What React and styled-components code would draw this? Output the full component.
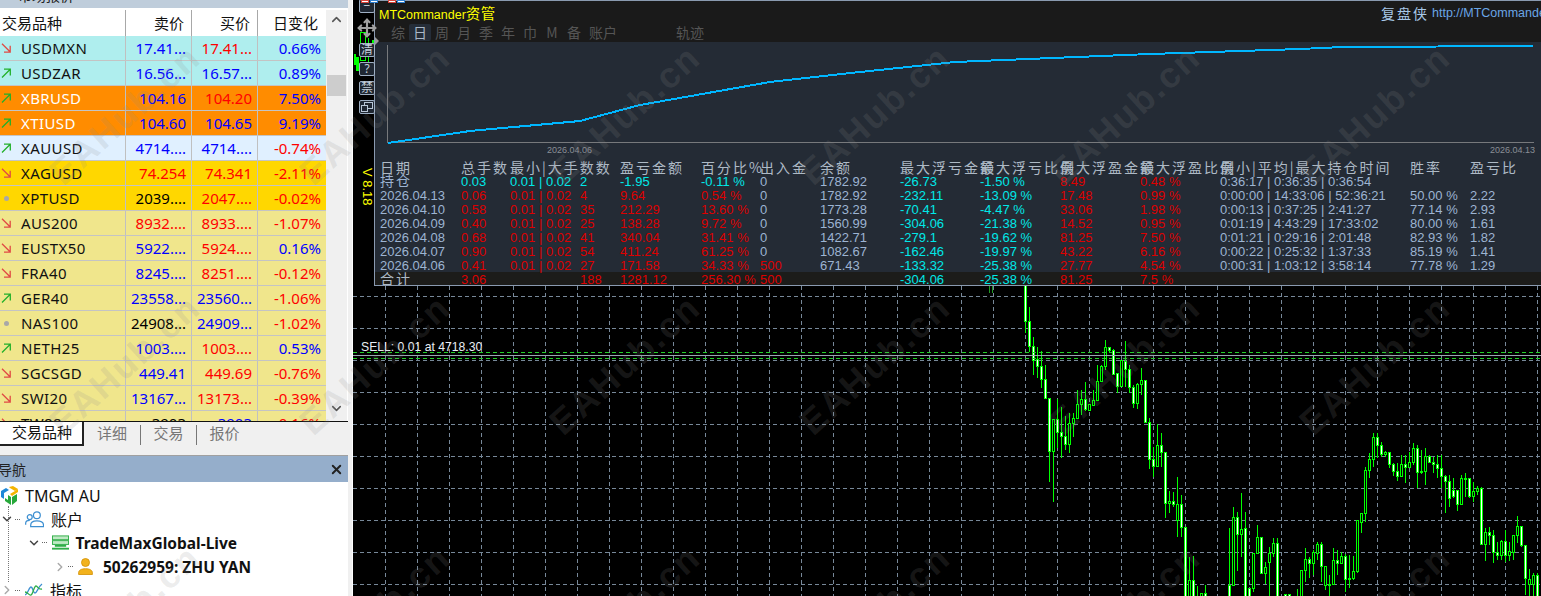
import React from 'react'
import styled, { createGlobalStyle } from 'styled-components'
import { Move, X, ChevronUp, ChevronDown, ChevronRight } from 'lucide-react'

const GlobalStyle = createGlobalStyle`
  html, body, #root { margin: 0; height: 100%; }
  body { overflow: hidden; background: #fff; font-family: "Noto Sans", "Noto Sans CJK SC", sans-serif; }
`

const QUOTES = [
  ['USDMXN', 'down', 'aqua', '17.41...', 'b', '17.41...', 'r', '0.66%', 'b'],
  ['USDZAR', 'up', 'aqua', '16.56...', 'b', '16.57...', 'b', '0.89%', 'b'],
  ['XBRUSD', 'up', 'orange', '104.16', 'b', '104.20', 'r', '7.50%', 'b'],
  ['XTIUSD', 'up', 'orange', '104.60', 'b', '104.65', 'b', '9.19%', 'b'],
  ['XAUUSD', 'up', 'ice', '4714....', 'b', '4714....', 'b', '-0.74%', 'r'],
  ['XAGUSD', 'down', 'gold', '74.254', 'r', '74.341', 'r', '-2.11%', 'r'],
  ['XPTUSD', 'flat', 'gold', '2039....', 'k', '2047....', 'r', '-0.02%', 'r'],
  ['AUS200', 'down', 'khaki', '8932....', 'r', '8933....', 'r', '-1.07%', 'r'],
  ['EUSTX50', 'down', 'khaki', '5922....', 'b', '5924....', 'r', '0.16%', 'b'],
  ['FRA40', 'down', 'khaki', '8245....', 'b', '8251....', 'r', '-0.12%', 'r'],
  ['GER40', 'up', 'khaki', '23558...', 'b', '23560...', 'b', '-1.06%', 'r'],
  ['NAS100', 'flat', 'khaki', '24908...', 'k', '24909...', 'b', '-1.02%', 'r'],
  ['NETH25', 'up', 'khaki', '1003....', 'b', '1003....', 'r', '0.53%', 'b'],
  ['SGCSGD', 'down', 'khaki', '449.41', 'b', '449.69', 'r', '-0.76%', 'r'],
  ['SWI20', 'down', 'khaki', '13167...', 'b', '13173...', 'r', '-0.39%', 'r'],
  ['TW88', 'down', 'khaki', '3903', 'k', '3903', 'b', '-0.16%', 'r'],
]

const ROW_BG = { aqua: '#afeeee', orange: '#ff8c00', ice: '#e0f0ff', gold: '#ffd700', khaki: '#f0e68c' }
const INK = { b: '#0000ff', r: '#ff0000', k: '#000' }
const TONE = { slate: '#9db4d2', red: '#dd0000', cyan: '#00e8e8', head: '#aebac6' }

const STATS = [
  ['持仓', '0.03', '0.01 | 0.02', '2', '-1.95', '-0.11 %', '0', '1782.92', '-26.73', '-1.50 %', '8.49', '0.48 %', '0:36:17 | 0:36:35 | 0:36:54', '', ''],
  ['2026.04.13', '0.06', '0.01 | 0.02', '4', '9.64', '0.54 %', '0', '1782.92', '-232.11', '-13.09 %', '17.48', '0.99 %', '0:00:00 | 14:33:06 | 52:36:21', '50.00 %', '2.22'],
  ['2026.04.10', '0.58', '0.01 | 0.02', '35', '212.29', '13.60 %', '0', '1773.28', '-70.41', '-4.47 %', '33.06', '1.98 %', '0:00:13 | 0:37:25 | 2:41:27', '77.14 %', '2.93'],
  ['2026.04.09', '0.40', '0.01 | 0.02', '25', '138.28', '9.72 %', '0', '1560.99', '-304.06', '-21.38 %', '14.52', '0.95 %', '0:01:19 | 4:43:29 | 17:33:02', '80.00 %', '1.61'],
  ['2026.04.08', '0.68', '0.01 | 0.02', '41', '340.04', '31.41 %', '0', '1422.71', '-279.1', '-19.62 %', '81.25', '7.50 %', '0:01:21 | 0:29:16 | 2:01:48', '82.93 %', '1.82'],
  ['2026.04.07', '0.90', '0.01 | 0.02', '54', '411.24', '61.25 %', '0', '1082.67', '-162.46', '-19.97 %', '43.22', '6.16 %', '0:00:22 | 0:25:32 | 1:37:33', '85.19 %', '1.41'],
  ['2026.04.06', '0.41', '0.01 | 0.02', '27', '171.58', '34.33 %', '500', '671.43', '-133.32', '-25.38 %', '27.77', '4.54 %', '0:00:31 | 1:03:12 | 3:58:14', '77.78 %', '1.29'],
]
const TOTAL = ['合计', '3.06', '', '188', '1281.12', '256.30 %', '500', '', '-304.06', '-25.38 %', '81.25', '7.5 %', '', '', '']

// colour of each column in a data row; the open-position row differs
const toneFor = (col, isOpen, value) => {
  if (col === 0 || col === 7 || col >= 12) return 'slate'
  if (col === 8 || col === 9) return 'cyan'
  if (col === 6) return value === '0' ? 'slate' : 'red'
  if (isOpen && col <= 5) return 'cyan'
  return 'red'
}

const CANDLES_A = [
  [15, 125, 15, 160, 1], [125, 200, 80, 215, 1], [198, 240, 172, 285, 1], [238, 260, 200, 295, 1],
  [258, 298, 213, 325, 1], [298, 356, 255, 358, 1], [355, 515, 355, 605, 1], [418, 515, 418, 665, 0],
  [418, 458, 358, 505, 1], [458, 470, 380, 533, 1], [470, 494, 408, 510, 1], [430, 494, 400, 518, 0],
  [415, 430, 400, 470, 0], [374, 416, 330, 416, 0], [358, 374, 330, 405, 0], [358, 388, 305, 392, 1],
  [372, 390, 372, 390, 0], [360, 375, 330, 378, 0], [304, 362, 255, 362, 0], [258, 304, 255, 305, 0],
  [202, 260, 180, 270, 0], [202, 212, 200, 220, 1], [210, 282, 208, 285, 1], [280, 320, 280, 338, 1],
  [242, 320, 240, 322, 0], [243, 268, 183, 322, 1], [268, 322, 255, 340, 1], [322, 370, 315, 385, 1],
  [312, 370, 310, 388, 0], [300, 314, 265, 345, 0], [300, 428, 300, 430, 1], [428, 538, 415, 568, 1],
  [538, 560, 500, 590, 1], [496, 560, 433, 560, 0], [496, 516, 460, 560, 1], [516, 670, 516, 715, 1],
  [664, 670, 632, 698, 0], [664, 674, 636, 680, 1], [672, 722, 590, 772, 0], [672, 742, 645, 770, 1],
  [742, 960, 742, 960, 1], [902, 960, 830, 960, 0], [900, 960, 828, 960, 1], [960, 970, 918, 970, 0],
  [940, 960, 940, 960, 0], [940, 960, 915, 960, 1],
]
const CANDLES_B = [
  [582, 600, 582, 600, 1], [582, 600, 582, 600, 1], [600, 610, 600, 610, 0], [600, 610, 568, 610, 0],
  [510, 600, 510, 600, 0], [478, 512, 445, 545, 0], [478, 490, 470, 535, 1], [458, 490, 450, 525, 0],
  [432, 460, 425, 480, 0], [432, 500, 425, 545, 1], [498, 556, 498, 570, 0], [552, 556, 525, 590, 0],
  [480, 553, 445, 555, 0], [482, 490, 450, 525, 1], [468, 490, 455, 490, 0], [468, 538, 462, 575, 1],
  [534, 538, 465, 565, 1], [514, 536, 468, 540, 0], [360, 515, 360, 518, 0], [340, 368, 338, 400, 0],
  [210, 340, 200, 365, 0], [178, 210, 158, 235, 0], [112, 178, 98, 200, 0], [112, 136, 98, 175, 1],
  [136, 164, 125, 170, 1], [156, 164, 152, 172, 0], [157, 193, 157, 205, 1], [193, 215, 188, 228, 1],
  [215, 228, 190, 242, 1], [193, 228, 165, 230, 0], [193, 202, 165, 250, 1], [188, 202, 155, 205, 0],
  [145, 188, 130, 195, 0], [145, 218, 135, 265, 1], [214, 218, 150, 222, 0], [170, 215, 145, 255, 0],
  [170, 188, 165, 190, 1], [186, 192, 170, 218, 1], [193, 206, 165, 235, 1], [206, 230, 165, 265, 1],
  [230, 245, 225, 338, 1], [245, 295, 225, 320, 1], [270, 290, 235, 295, 1], [270, 314, 270, 332, 1],
  [235, 314, 225, 315, 0], [235, 237, 218, 290, 0], [235, 290, 235, 295, 1], [275, 290, 245, 305, 0],
  [265, 275, 258, 285, 0], [265, 432, 262, 434, 1], [398, 432, 385, 482, 0], [398, 405, 382, 435, 1],
  [406, 458, 390, 488, 1], [458, 466, 425, 480, 1], [424, 466, 420, 480, 0], [424, 466, 390, 485, 1],
  [455, 466, 425, 482, 0], [405, 456, 405, 480, 0], [378, 406, 348, 430, 0], [378, 436, 378, 440, 1],
  [436, 536, 436, 585, 1], [538, 553, 508, 588, 0], [526, 553, 518, 588, 0], [526, 600, 518, 600, 1],
]
const CANDLES_C = [
  [916, 960, 745, 960, 1], [712, 916, 682, 916, 0], [712, 764, 695, 872, 1], [748, 764, 640, 830, 0],
  [745, 960, 695, 960, 1], [925, 960, 925, 960, 1], [820, 926, 820, 935, 0], [772, 820, 735, 822, 0],
  [772, 880, 770, 882, 1], [862, 880, 845, 912, 0], [820, 848, 800, 960, 0], [790, 820, 775, 830, 0],
  [790, 960, 775, 960, 1],
]

const toBars = () => {
  const bars = []
  const add = (list, startX, base) =>
    list.forEach((c, i) => bars.push({
      x: startX + i * 4,
      top: base + c[0] / 3,
      bottom: base + c[1] / 3,
      high: base + c[2] / 3,
      low: base + c[3] / 3,
      filled: c[4],
    }))
  add(CANDLES_A, 1025, 280)
  add(CANDLES_C, 1229, 280)
  add(CANDLES_B, 1285, 400)
  return bars
}
const BARS = toBars()

const range = (from, to, step) => {
  const out = []
  for (let v = from; v <= to; v += step) out.push(v)
  return out
}

const Trend = ({ dir }) => {
  if (dir === 'flat') return <FlatDot />
  const up = dir === 'up'
  return (
    <svg width="10" height="10" viewBox="0 0 10 10" fill="none" stroke={up ? '#22b02a' : '#e04a44'} strokeWidth="1.3">
      {up ? <path d="M1 9.5 9 1.5M3 1.2h6.3v6.2" /> : <path d="M1 .8l8 8M9.2 2.8v6.3H3" />}
    </svg>
  )
}

const CubeIcon = () => (
  <svg width="18" height="20" viewBox="0 0 18 20">
    <path d="M1 5l5-3 3 2-5 3v6l-3-2z" fill="#1e88d8" />
    <path d="M9 1l4-1 5 3-3 2-5-3z" fill="#f4b400" />
    <path d="M18 3v3l-6 4-2-2 5-3z" fill="#f4b400" />
    <path d="M5 12l3 2V9l3 2v8l-3-2-3-2z" fill="#27a83a" />
    <path d="M12 11l5-3v7l-5 4z" fill="#27a83a" />
  </svg>
)
const UsersIcon = () => (
  <svg width="19" height="18" viewBox="0 0 20 18" fill="none" stroke="#3d8fd1" strokeWidth="1.3">
    <circle cx="12.5" cy="5" r="3.6" />
    <path d="M6 17v-1.5c0-3 2.6-4.5 6.5-4.5s7 1.5 7 4.5V17z" />
    <circle cx="5" cy="7" r="2.6" />
    <path d="M.7 15v-1.5c0-1.800 1.8-3 4.3-3" />
  </svg>
)
const ServerIcon = () => (
  <svg width="17" height="16" viewBox="0 0 18 16">
    <rect x="0.5" y="0.5" width="17" height="4" fill="#bfe9c4" stroke="#2fae47" />
    <rect x="0.5" y="5.5" width="17" height="4" fill="#bfe9c4" stroke="#2fae47" />
    <rect x="3" y="10" width="12" height="2" fill="#2fae47" />
    <rect x="0" y="13" width="18" height="2" fill="#2fae47" />
  </svg>
)
const PersonIcon = () => (
  <svg width="15" height="17" viewBox="0 0 15 17" fill="#f2b21c" stroke="#d28f00" strokeWidth="0.8">
    <circle cx="7.5" cy="4.5" r="4" />
    <path d="M.6 16.5v-1.8c0-2.500 2.800-4 6.900-4s6.900 1.500 6.900 4v1.800z" />
  </svg>
)
const WaveIcon = () => (
  <svg width="18" height="14" viewBox="0 0 18 14" fill="none" strokeWidth="1.3">
    <path d="M0 12c3-1 4-8 6-8s2 6 4 6 3-6 7-9" stroke="#3d8fd1" />
    <path d="M0 9c3 0 4 4 6 3s3-9 5-9 2 4 6 3" stroke="#2fae47" />
  </svg>
)
const WindowIcon = () => (
  <svg width="12" height="10" viewBox="0 0 12 10" fill="none" stroke="#b8c6d6">
    <rect x="3.5" y="0.5" width="8" height="6" />
    <rect x="0.5" y="3.5" width="6" height="6" fill="#1f2732" />
  </svg>
)

const App = () => (
  <>
    <GlobalStyle />
    <Page>
      <Sidebar>
        <WatchTitle><span>市场报价</span></WatchTitle>
        <QuoteTable>
          <QuoteHead>
            <HeadCell $first>交易品种</HeadCell>
            <HeadCell>卖价</HeadCell>
            <HeadCell>买价</HeadCell>
            <HeadCell>日变化</HeadCell>
          </QuoteHead>
          {QUOTES.map(q => (
            <QuoteRow key={q[0]} $bg={ROW_BG[q[2]]}>
              <NameCell $light={q[2] === 'orange'}>
                <TrendSlot><Trend dir={q[1]} /></TrendSlot>
                {q[0]}
              </NameCell>
              <ValueCell $ink={INK[q[4]]}>{q[3]}</ValueCell>
              <ValueCell $ink={INK[q[6]]}>{q[5]}</ValueCell>
              <ValueCell $ink={INK[q[8]]} $last>{q[7]}</ValueCell>
            </QuoteRow>
          ))}
          <Scrollbar>
            <ChevronUp size={15} strokeWidth={2.5} color="#555" />
            <ScrollThumb />
            <ChevronDown size={15} strokeWidth={2.5} color="#555" />
          </Scrollbar>
        </QuoteTable>
        <TabBar>
          <ActiveTab>交易品种</ActiveTab>
          <PlainTab>详细</PlainTab>
          <PlainTab $rule>交易</PlainTab>
          <PlainTab $rule>报价</PlainTab>
        </TabBar>
        <NavTitle>
          <span>导航</span>
          <X size={15} strokeWidth={3} color="#222" />
        </NavTitle>
        <Tree>
          <TreeGuide />
          <TreeRow $indent={0}>
            <CubeIcon />
            <TreeLabel>TMGM AU</TreeLabel>
          </TreeRow>
          <TreeRow $indent={1}>
            <ChevronDown size={14} strokeWidth={2.5} color="#444" />
            <Dots />
            <UsersIcon />
            <TreeLabel>账户</TreeLabel>
          </TreeRow>
          <TreeRow $indent={2}>
            <ChevronDown size={14} strokeWidth={2.5} color="#444" />
            <Dots />
            <ServerIcon />
            <TreeLabel $bold>TradeMaxGlobal-Live</TreeLabel>
          </TreeRow>
          <TreeRow $indent={3}>
            <ChevronRight size={14} strokeWidth={2.5} color="#aaa" />
            <Dots />
            <PersonIcon />
            <TreeLabel $bold $gap={10}>50262959: ZHU YAN</TreeLabel>
          </TreeRow>
          <TreeRow $indent={1}>
            <ChevronRight size={14} strokeWidth={2.5} color="#aaa" />
            <Dots />
            <WaveIcon />
            <TreeLabel>指标</TreeLabel>
          </TreeRow>
        </Tree>
      </Sidebar>

      <Splitter />

      <ChartArea>
        <ChartSvg viewBox="353 0 1188 596">
          <g stroke="#778899" strokeDasharray="4 3" shapeRendering="crispEdges">
            {range(296, 590, 32).map(y => <line key={y} x1="353" x2="1541" y1={y + 0.5} y2={y + 0.5} />)}
            {range(385, 1537, 32).map(x => <line key={x} x1={x + 0.5} x2={x + 0.5} y1="286" y2="596" />)}
          </g>
          <g stroke="#00ff00" shapeRendering="crispEdges">
            <line x1="989.5" x2="989.5" y1="286" y2="293" stroke="#1f9a24" />
            <line x1="992.5" x2="992.5" y1="286" y2="293" stroke="#1f9a24" />
            <rect x="360.5" y="32.5" width="5" height="28" fill="#000" />
            <line x1="368.5" x2="368.5" y1="38" y2="62" />
            <rect x="372" y="40" width="1" height="13" fill="#00ff00" />
            <rect x="354" y="54" width="1" height="10" fill="#00ff00" />
            <rect x="356" y="57" width="2" height="13" fill="#00ff00" />
            {BARS.map(b => (
              <g key={b.x}>
                <line x1={b.x + 0.5} x2={b.x + 0.5} y1={b.high} y2={b.low} />
                <rect x={b.x - 0.5} y={b.top} width="2" height={Math.max(b.bottom - b.top, 1)} fill={b.filled ? '#fff' : '#000'} />
              </g>
            ))}
          </g>
          <g shapeRendering="crispEdges">
            <line x1="353" x2="1541" y1="352.5" y2="352.5" stroke="#22d02a" strokeDasharray="4 3" />
            <line x1="353" x2="1541" y1="358.5" y2="358.5" stroke="#22d02a" strokeDasharray="4 3" />
            <line x1="353" x2="1541" y1="355.5" y2="355.5" stroke="#9aa6b2" />
          </g>
          <OrderLabel x="361" y="351">SELL: 0.01 at 4718.30</OrderLabel>
        </ChartSvg>

        <SideButtons>
          <SideButton>−</SideButton>
          <MoveSlot><Move size={20} strokeWidth={2.6} color="#a0a0a0" /></MoveSlot>
          <SideButton>清</SideButton>
          <SideButton>?</SideButton>
          <SideButton>禁</SideButton>
          <SideButton><WindowIcon /></SideButton>
        </SideButtons>
        <Version>V 8.18</Version>

        <Chips>
          <Chip $edge="#d8443a" />
          <Chip $edge="#2f7fd0" />
          <Chip $edge="#d8443a" $skip />
          <Chip $edge="#2f7fd0" />
        </Chips>

        <Panel>
          <Notch />
          <PanelHeader>
            <TitleRow>
              <PanelTitle>MTCommander<TitleCjk>资管</TitleCjk></PanelTitle>
              <Brand>复盘侠</Brand>
              <BrandLink>http://MTCommander.com</BrandLink>
            </TitleRow>
            <PeriodTabs>
              {['综', '日', '周', '月', '季', '年', '巾', 'M', '备'].map(t => (
                <PeriodTab key={t} $active={t === '日'}>{t}</PeriodTab>
              ))}
              <PeriodTab $wide>账户</PeriodTab>
              <PeriodTab $wide $push>轨迹</PeriodTab>
            </PeriodTabs>
          </PanelHeader>

          <EquitySvg viewBox="375 42 1166 118">
            <g stroke="#77797c" shapeRendering="crispEdges">
              <line x1="387.5" x2="387.5" y1="45" y2="143" />
              <line x1="387" x2="1534" y1="142.5" y2="142.5" />
            </g>
            <polyline
              fill="none"
              stroke="#00b7ff"
              strokeWidth="2"
              shapeRendering="crispEdges"
              points="388,143 470,131 580,121 640,105 770,82 860,72 955,62 1150,54 1300,49 1332,47.5 1438,46.5 1533,46"
            />
            <AxisLabel x="547" y="153">2026.04.06</AxisLabel>
            <AxisLabel x="1490" y="153">2026.04.13</AxisLabel>
          </EquitySvg>

          <StatsHead>
            <StatHeading>日期</StatHeading>
            <StatHeading>总手数</StatHeading>
            <StatHeading $span={2}>最小|大手数数</StatHeading>
            <StatHeading>盈亏金额</StatHeading>
            <StatHeading>百分比%</StatHeading>
            <StatHeading>出入金</StatHeading>
            <StatHeading>余额</StatHeading>
            <StatHeading>最大浮亏金额</StatHeading>
            <StatHeading>最大浮亏比例</StatHeading>
            <StatHeading>最大浮盈金额</StatHeading>
            <StatHeading>最大浮盈比例</StatHeading>
            <StatHeading>最小|平均|最大持仓时间</StatHeading>
            <StatHeading>胜率</StatHeading>
            <StatHeading>盈亏比</StatHeading>
          </StatsHead>
          {STATS.map((row, r) => (
            <StatsRow key={row[0]}>
              {row.map((v, c) => (
                <StatCell key={c} $tone={TONE[toneFor(c, r === 0, v)]} $wideLabel={c === 0 && r === 0}>{v}</StatCell>
              ))}
            </StatsRow>
          ))}
          <TotalRow>
            {TOTAL.map((v, c) => (
              <StatCell key={c} $tone={TONE[c === 0 ? 'head' : toneFor(c, false, v)]} $wideLabel={c === 0}>{v}</StatCell>
            ))}
          </TotalRow>
        </Panel>
      </ChartArea>

      <Watermarks>
        {range(0, 20, 1).map(i => (
          <MarkCell key={i}><Mark>EAHub.cn</Mark></MarkCell>
        ))}
      </Watermarks>
    </Page>
  </>
)

export default App

const Page = styled.div`
  position: relative;
  display: flex;
  height: 596px;
  width: 1541px;
  overflow: hidden;
`

const Sidebar = styled.aside`
  flex: 0 0 348px;
  display: flex;
  flex-direction: column;
  background: #fff;
`

const WatchTitle = styled.div`
  height: 8px;
  margin-bottom: 2px;
  background: #bfcddb;
  overflow: hidden;
  span {
    display: block;
    margin: -13px 0 0 18px;
    font-size: 14px;
    line-height: 18px;
    color: #222;
  }
`

const QuoteTable = styled.div`
  position: relative;
  height: 411px;
  overflow: hidden;
  padding-right: 22px;
`

const quoteColumns = `126px 66px 66px 68px`

const QuoteHead = styled.div`
  display: grid;
  grid-template-columns: ${quoteColumns};
  height: 26px;
  background: #fff;
`

const HeadCell = styled.div`
  border-right: 1px solid #a8a8a8;
  padding: ${p => (p.$first ? '0 0 0 2px' : '0 7px 0 0')};
  text-align: ${p => (p.$first ? 'left' : 'right')};
  font-size: 15px;
  line-height: 27px;
  color: #111;
  &:last-child { border-right: 0; padding-right: 8px; }
`

const QuoteRow = styled.div`
  display: grid;
  grid-template-columns: ${quoteColumns};
  height: 25px;
  box-sizing: border-box;
  background: ${p => p.$bg};
  border-bottom: 1px solid #c4c4c4;
`

const NameCell = styled.div`
  display: flex;
  align-items: center;
  border-right: 1px solid #c0c0c0;
  font-size: 15px;
  letter-spacing: 0.4px;
  line-height: 24px;
  color: ${p => (p.$light ? '#fff' : '#111')};
`

const TrendSlot = styled.span`
  flex: 0 0 21px;
  display: flex;
  align-items: center;
  padding-left: 1px;
  box-sizing: border-box;
  height: 14px;
`

const FlatDot = styled.span`
  width: 5px;
  height: 5px;
  margin-left: 3px;
  border-radius: 50%;
  background: #a8a8a8;
`

const ValueCell = styled.div`
  border-right: ${p => (p.$last ? '0' : '1px solid #c0c0c0')};
  padding-right: 5px;
  text-align: right;
  font-size: 15px;
  line-height: 24px;
  white-space: nowrap;
  overflow: hidden;
  color: ${p => p.$ink};
`

const Scrollbar = styled.div`
  position: absolute;
  top: -2px;
  right: 1px;
  bottom: 0;
  width: 21px;
  display: flex;
  flex-direction: column;
  align-items: center;
  padding: 4px 0 5px;
  background: #f0f0f0;
  box-sizing: border-box;
  svg:last-child { margin-top: auto; }
`

const ScrollThumb = styled.div`
  width: 19px;
  height: 21px;
  margin-top: 48px;
  background: #cdcdcd;
`

const TabBar = styled.div`
  display: flex;
  align-items: flex-start;
  height: 35px;
  box-sizing: border-box;
  background: #f0f0f0;
  border-top: 1px solid #111;
  border-bottom: 1px solid #a0a0a0;
`

const ActiveTab = styled.div`
  width: 84px;
  height: 24px;
  box-sizing: border-box;
  background: #fff;
  border-right: 2px solid #222;
  border-bottom: 2px solid #222;
  padding-left: 12px;
  font-size: 15px;
  line-height: 21px;
  color: #111;
`

const PlainTab = styled.div`
  width: 56px;
  height: 20px;
  margin-top: 3px;
  box-sizing: border-box;
  text-align: center;
  border-left: ${p => (p.$rule ? '1px solid #777' : '0')};
  font-size: 15px;
  line-height: 17px;
  color: #777;
`

const NavTitle = styled.div`
  display: flex;
  align-items: center;
  justify-content: space-between;
  height: 26px;
  padding-right: 4px;
  background: #95aecb;
  font-size: 14px;
  color: #222;
  span { margin-left: -2px; }
`

const Tree = styled.div`
  position: relative;
  flex: 1;
  overflow: hidden;
  padding-top: 2px;
`

const TreeGuide = styled.div`
  position: absolute;
  left: 8px;
  top: 24px;
  height: 76px;
  border-left: 1px dotted #777;
`

const TreeRow = styled.div`
  position: relative;
  display: flex;
  align-items: center;
  height: 23.6px;
  padding-left: ${p => (p.$indent === 0 ? 0 : (p.$indent - 1) * 26.5)}px;
  white-space: nowrap;
`

const Dots = styled.span`
  width: 5px;
  margin: 0 5px 0 1px;
  border-top: 1px dotted #666;
`

const TreeLabel = styled.span`
  margin-left: ${p => p.$gap || 7}px;
  font-size: ${p => (p.$bold ? '15.5px' : '16px')};
  font-weight: ${p => (p.$bold ? 700 : 400)};
  color: #111;
`

const Splitter = styled.div`
  flex: 0 0 5px;
  box-sizing: border-box;
  background: #f0f0f0;
  border-right: 1px solid #fff;
`

const ChartArea = styled.main`
  position: relative;
  flex: 1;
  background: #000;
`

const ChartSvg = styled.svg`
  display: block;
  width: 1188px;
  height: 596px;
`

const OrderLabel = styled.text`
  font-family: "Liberation Sans", sans-serif;
  font-size: 12.2px;
  fill: #e8eef4;
`

const SideButtons = styled.div`
  position: absolute;
  top: -1px;
  left: 4px;
  display: flex;
  flex-direction: column;
  align-items: center;
  gap: 5px;
  z-index: 1;
`

const SideButton = styled.div`
  width: 16px;
  height: 14px;
  box-sizing: border-box;
  display: flex;
  align-items: center;
  justify-content: center;
  border: 1px solid #9fb0c4;
  border-radius: 2px;
  background: #1f2732;
  font-size: 12px;
  line-height: 12px;
  color: #c4d0dc;
`

const MoveSlot = styled.div`
  height: 20px;
`

const Version = styled.div`
  position: absolute;
  top: 168px;
  left: 8px;
  writing-mode: vertical-rl;
  font-family: "Liberation Sans", sans-serif;
  font-size: 13px;
  line-height: 13px;
  color: #ffff00;
`

const Chips = styled.div`
  position: absolute;
  top: 0;
  left: 7px;
  display: flex;
  z-index: 2;
`

const Chip = styled.span`
  width: 8px;
  height: 3px;
  box-sizing: border-box;
  margin-left: ${p => (p.$skip ? '10px' : '1px')};
  background: #fff;
  border: 1px solid ${p => p.$edge};
`

const Panel = styled.section`
  position: absolute;
  top: 0;
  left: 21px;
  right: 0;
  height: 286px;
  box-sizing: border-box;
  border: 1px solid #8a9ab0;
  border-right: 0;
  background: #242b35;
  overflow: hidden;
`

const Notch = styled.span`
  position: absolute;
  top: 36px;
  left: 0;
  border-left: 4px solid #9a9a9a;
  border-top: 4px solid transparent;
  border-bottom: 4px solid transparent;
`

const PanelHeader = styled.header`
  height: 41px;
  background: #1a1a1a;
`

const TitleRow = styled.div`
  display: flex;
  align-items: center;
  height: 23px;
  padding-left: 4px;
  white-space: nowrap;
`

const PanelTitle = styled.div`
  flex: 0 0 1002px;
  font-family: "Liberation Sans", "Noto Sans CJK SC", sans-serif;
  font-size: 12.5px;
  color: #ffff00;
`

const TitleCjk = styled.span`
  font-family: "Noto Sans CJK SC", sans-serif;
  font-size: 14.5px;
  letter-spacing: 0.5px;
`

const Brand = styled.span`
  font-family: "Noto Sans CJK SC", sans-serif;
  font-size: 14px;
  letter-spacing: 2px;
  color: #a8c8e8;
`

const BrandLink = styled.span`
  margin-left: 3px;
  font-family: "Liberation Sans", sans-serif;
  font-size: 12.5px;
  color: #6ba6e6;
`

const PeriodTabs = styled.nav`
  display: flex;
  height: 17px;
  padding-left: 12px;
`

const PeriodTab = styled.span`
  flex: 0 0 ${p => (p.$wide ? '36px' : '22px')};
  margin-left: ${p => (p.$push ? '51px' : '0')};
  text-align: center;
  border-radius: 2px;
  background: ${p => (p.$active ? '#252d38' : 'transparent')};
  font-family: "Noto Sans CJK SC", sans-serif;
  font-size: 14px;
  line-height: 17px;
  color: ${p => (p.$active ? '#aab8c8' : '#555')};
`

const EquitySvg = styled.svg`
  display: block;
  width: 1166px;
  height: 118px;
`

const AxisLabel = styled.text`
  font-family: "Liberation Sans", sans-serif;
  font-size: 9px;
  fill: #8a8f96;
`

const statColumns = `81px 49px 70px 40px 81px 59px 60px 80px 80px 80px 80px 80px 190px 60px 71px`

const StatsHead = styled.div`
  display: grid;
  grid-template-columns: ${statColumns};
  height: 14px;
  padding-left: 5px;
`

const StatHeading = styled.div`
  grid-column: span ${p => p.$span || 1};
  font-family: "Noto Sans CJK SC", sans-serif;
  font-size: 14px;
  line-height: 14px;
  letter-spacing: 2px;
  white-space: nowrap;
  color: ${TONE.head};
`

const StatsRow = styled.div`
  display: grid;
  grid-template-columns: ${statColumns};
  height: 14px;
  padding-left: 5px;
`

const TotalRow = styled(StatsRow)`
  background: #1c1c1a;
  height: 13px;
`

const StatCell = styled.div`
  font-family: "Liberation Sans", "Noto Sans CJK SC", sans-serif;
  font-size: ${p => (p.$wideLabel ? '14px' : '13px')};
  letter-spacing: ${p => (p.$wideLabel ? '2px' : '0')};
  line-height: ${p => (p.$wideLabel ? '14px' : '16px')};
  white-space: nowrap;
  color: ${p => p.$tone};
`

const Watermarks = styled.div`
  position: absolute;
  top: -10px;
  left: 0;
  display: grid;
  grid-template-columns: repeat(6, 250px);
  grid-auto-rows: 250px;
  pointer-events: none;
`

const MarkCell = styled.div`
  display: flex;
  align-items: center;
  justify-content: center;
`

const Mark = styled.span`
  transform: rotate(-42deg);
  font-family: "Liberation Sans", sans-serif;
  font-size: 36px;
  font-weight: 700;
  letter-spacing: 2px;
  white-space: nowrap;
  color: rgba(140, 140, 140, 0.17);
`
